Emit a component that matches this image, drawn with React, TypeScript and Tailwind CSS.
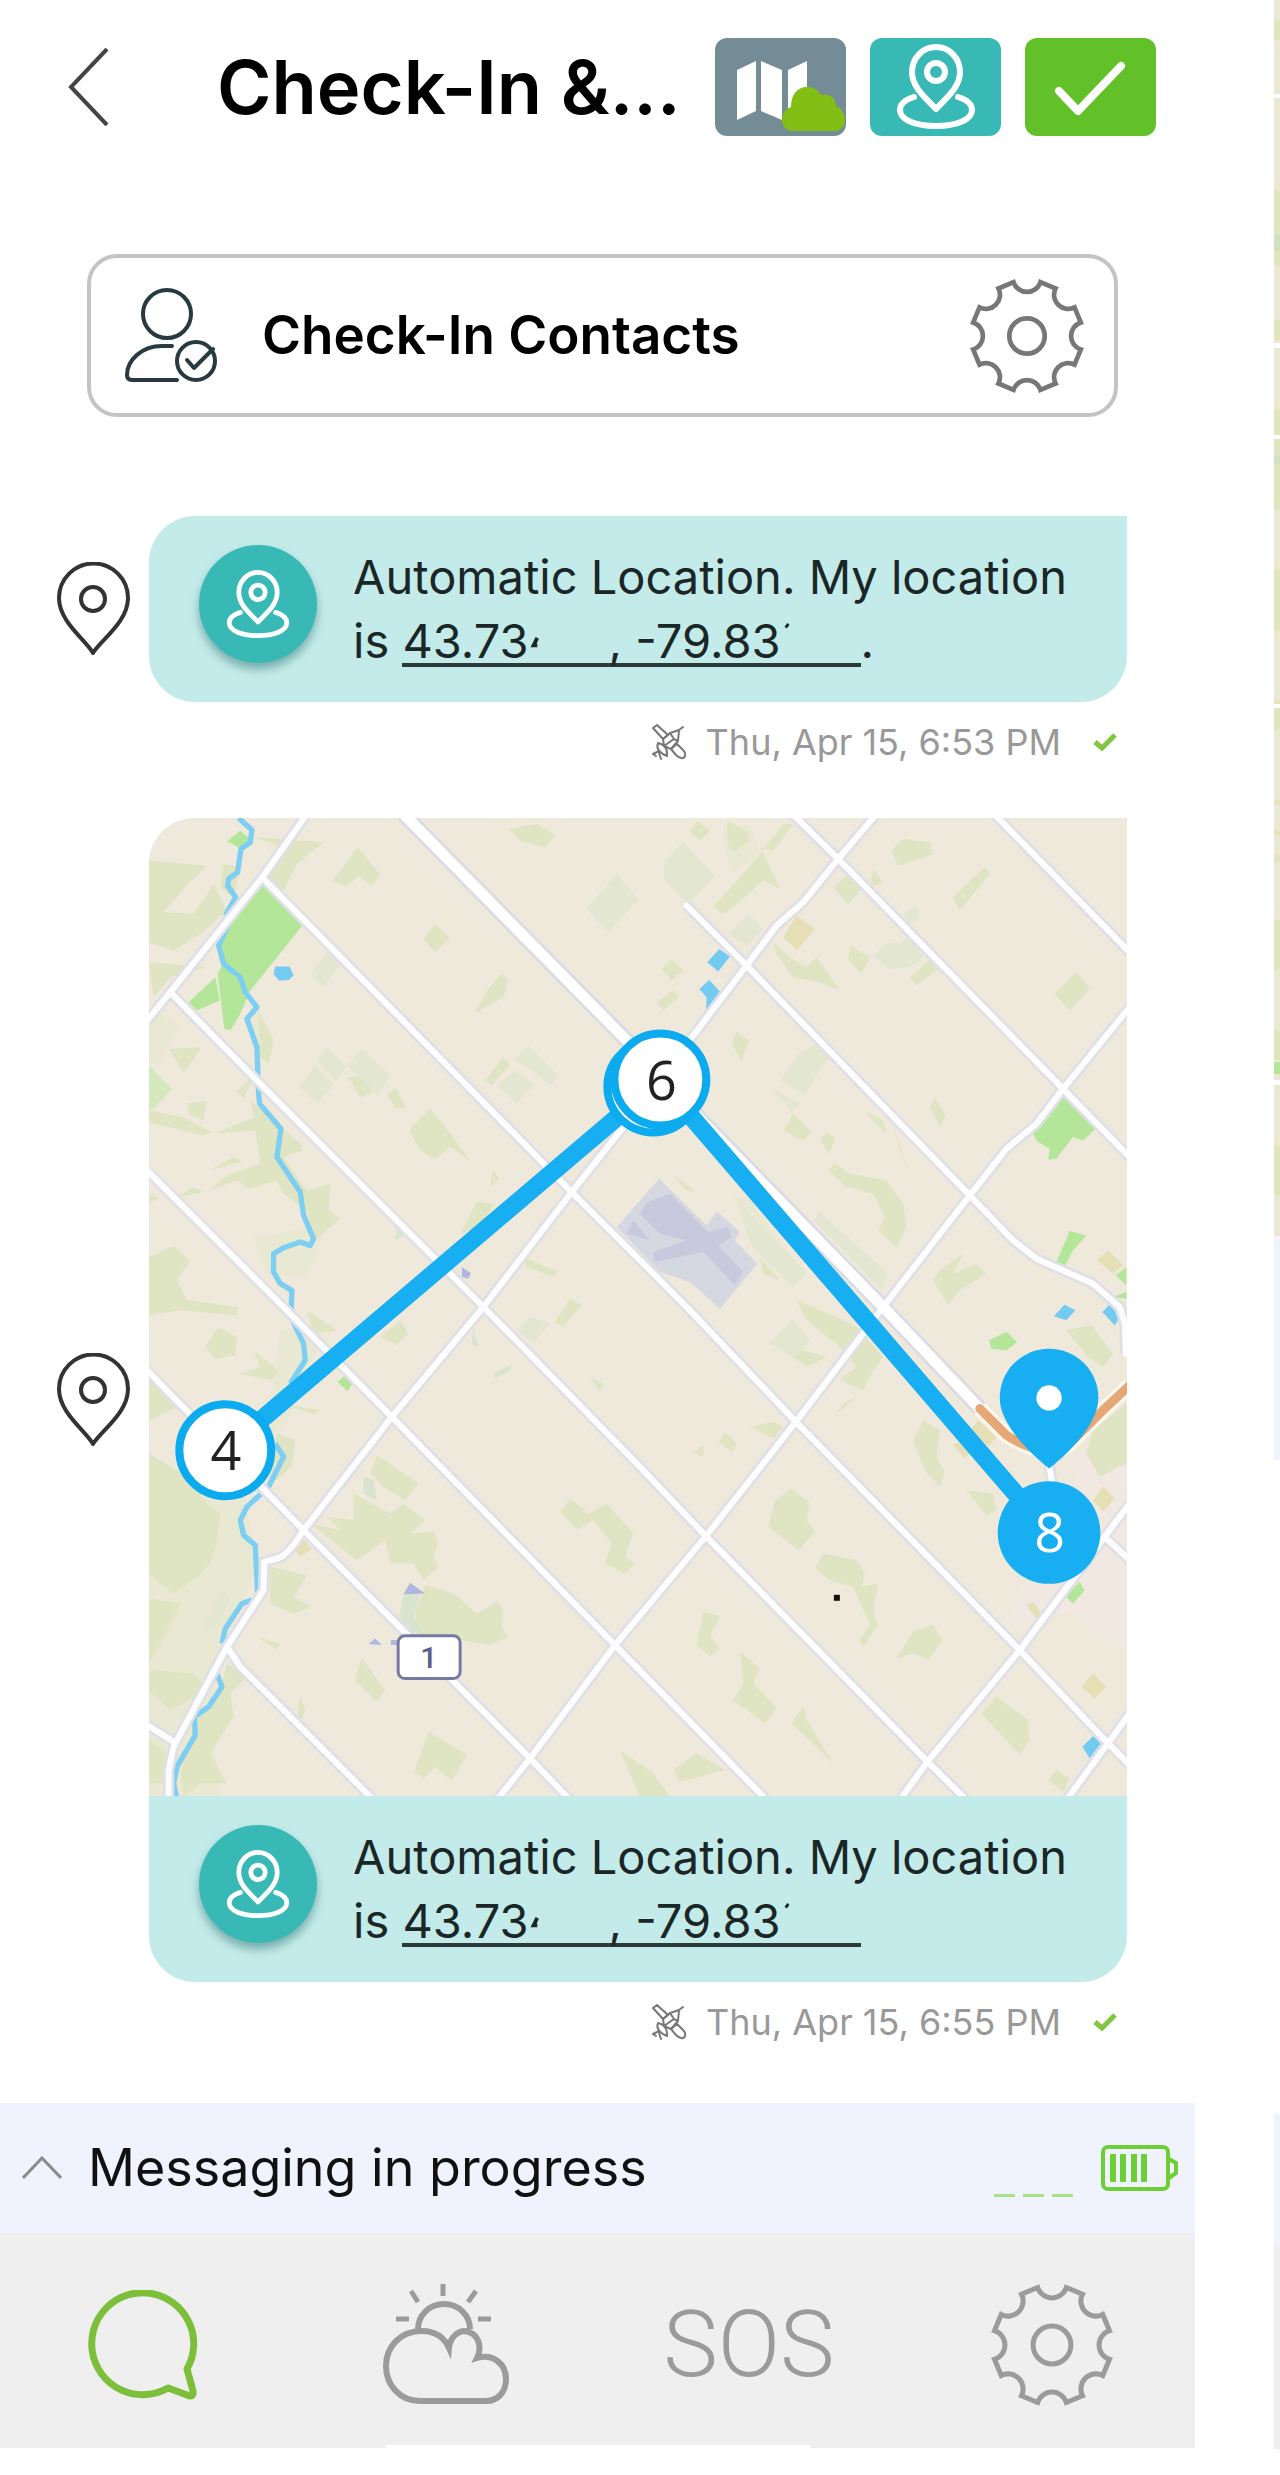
import React from 'react';

type IconProps = { className?: string };

const gearPath = (() => {
  const pt = (deg: number) => {
    const a = (deg * Math.PI) / 180;
    return `${(50 + 47 * Math.sin(a)).toFixed(1)} ${(50 - 47 * Math.cos(a)).toFixed(1)}`;
  };
  let d = '';
  for (let k = 0; k < 8; k++) {
    d += `${k === 0 ? 'M' : 'L'}${pt(k * 45 - 14)} A12 12 0 0 0 ${pt(k * 45 + 14)} `;
  }
  return d + 'Z';
})();

function GearIcon({ className }: IconProps) {
  return (
    <svg viewBox="0 0 100 100" className={className} fill="none" stroke="currentColor" strokeWidth="4" aria-hidden="true">
      <path d={gearPath} />
      <circle cx="50" cy="50" r="15" />
    </svg>
  );
}

function LocateIcon({ className }: IconProps) {
  return (
    <svg viewBox="0 0 80 86" className={className} fill="none" stroke="currentColor" strokeWidth="6" strokeLinecap="round" strokeLinejoin="round" aria-hidden="true">
      <path d="M40 65 C31 55 16 44 16 28 A24 25 0 0 1 64 28 C64 44 49 55 40 65 Z" />
      <circle cx="40" cy="28" r="9" />
      <path d="M18 53 C8 56 4 61 4 66 C4 76 20 82 40 82 C60 82 76 76 76 66 C76 61 72 56 62 53" />
    </svg>
  );
}

function PinIcon({ className }: IconProps) {
  return (
    <svg viewBox="0 0 73 94" className={className} fill="none" stroke="currentColor" strokeWidth="4" strokeLinejoin="round" aria-hidden="true">
      <path d="M36 91 C29 78 2 60 2 36 A34 34 0 0 1 71 36 C71 60 44 78 36 91 Z" />
      <circle cx="36" cy="37" r="12" />
    </svg>
  );
}

function ContactIcon({ className }: IconProps) {
  return (
    <svg viewBox="0 0 94 96" className={className} fill="none" stroke="currentColor" strokeWidth="4" strokeLinecap="round" strokeLinejoin="round" aria-hidden="true">
      <circle cx="43" cy="26" r="24" />
      <path d="M48 58 H38 C18 58 3 72 3 87 C3 91 5 92 8 92 H53" />
      <circle cx="72" cy="73" r="19" />
      <path d="M63 72 L70 80 L89 61" />
    </svg>
  );
}

function SatelliteIcon({ className }: IconProps) {
  return (
    <svg viewBox="0 0 38 38" className={className} fill="none" stroke="currentColor" strokeWidth="2" strokeLinecap="round" strokeLinejoin="round" aria-hidden="true">
      <path d="M3 5 L7 2 L18 12 L13 16 Z M27 21 L34 28 Q37 33 33 35 Q30 36 26 32 L21 26 Z" />
      <path d="M13 16 L20 10 L29 7 L28 18 L21 26 L14 23 Z M29 7 L33 4 M20 10 L24 16 L14 23 M24 16 L28 18" />
      <path d="M8 20 Q18 22 17 33 M8 20 Q5 28 17 33 M9 28 L3 31 M9 30 L11 36 M3 31 L6 33" />
    </svg>
  );
}

// Big woods and fields first, roads over them, then the track
function TrackMap() {
  const roads = [
    'M500 10 L370 195 L90 545 L20 630',
    'M370 205 L1295 1145 L1650 1500 L1968 1835 L2640 2520 L2905 2800 L2970 2865',
    'M90 545 L355 815 L1030 1490 L1500 1970 L1698 2178 L2363 2855 L2480 2970',
    'M20 1080 L430 1490 L755 1820 L1425 2505 L1880 2970',
    'M20 1680 L490 2160 L1170 2845 L1290 2970',
    'M260 2510 L300 2570 L700 2970',
    'M1640 285 L1820 465 L2490 1155 L2620 1290 L2690 1345 L2860 1420 L2940 1490 L2956 1540 L2958 1630',
    'M1960 12 L2095 145 L2770 835 L2970 1040',
    'M2565 12 L2970 425',
    'M2895 2180 L2970 2250',
    'M2210 10 L2095 145 L1990 275 L1910 345 L1820 465 L1450 950 L1295 1145 L1030 1490 L755 1820 L490 2160 Q440 2240 410 2245 L372 2255 L370 2340 L260 2510 L100 2810 L85 2880 L85 2970',
    'M2970 590 L2770 835 L2690 940 L2600 1015 L2490 1155 L2230 1490 L1968 1835 L1698 2178 L1425 2505 L1170 2845 L1070 2970',
    'M2970 2080 L2895 2180 L2640 2520 L2363 2855 L2280 2970',
    'M2970 2710 L2905 2800 L2780 2970',
    'M20 2745 L100 2795',
    'M2728 1960 L2740 2040',
  ];
  return (
    <svg viewBox="26 22 2936 2936" className="block w-full" role="img" aria-label="Track map">
      <rect width="3000" height="3000" fill="#efe9db" />

      <g fill="#e9e9d3">
        <path d="M26 600 L120 640 L60 760 L26 760 Z M330 560 L400 690 L380 760 L330 700 Z" />
        <path d="M26 1980 H300 L350 2280 L250 2500 L210 2700 L240 2960 L26 2960 Z" />
        <path d="M340 1280 L560 1240 L500 1400 L380 1390 Z M420 1560 L560 1540 L440 1840 L380 1880 Z" />
        <path d="M1750 60 L1830 40 L1860 130 L1770 190 Z M1780 1160 L1830 1160 L1950 1350 L1900 1400 Z" />
      </g>
      <path fill="#f1e8e2" d="M2790 1930 L2960 1900 L2960 2510 L2890 2490 L2800 2400 L2600 2450 L2640 2330 L2860 2200 Z" />

      <g fill="#dfe4c3">
        <path d="M26 150 L200 165 L140 225 L70 305 L160 310 L220 220 L260 300 L180 370 L100 420 L26 395 Z" />
        <path d="M250 160 L300 170 L280 260 L240 230 Z M26 455 L200 470 L90 500 L40 560 Z" />
        <path d="M340 80 L550 95 L470 160 L430 240 L380 195 L430 110 Z" />
        <path d="M652 110 L720 190 L695 228 L655 195 L620 228 L575 212 Z M1105 55 L1190 40 L1248 75 L1215 110 L1140 90 Z" />
        <path d="M885 340 L930 382 L885 425 L850 385 Z M1085 488 L1105 510 L1090 560 L1003 608 L1040 540 Z" />
        <path d="M85 715 L185 710 L130 785 Z M355 600 L400 690 L385 760 L360 740 Z M140 880 L200 870 L190 930 L145 910 Z" />
        <path d="M26 900 L130 920 L215 965 L190 975 L26 935 Z M220 970 L340 920 L330 870 L400 930 L480 1000 L490 1020 L430 1040 L500 1140 L570 1120 L565 1200 L600 1225 L520 1290 L500 1200 L430 1150 L410 1110 L330 1135 L290 1110 L205 1140 L260 1095 L360 1060 L345 960 Z" />
        <path d="M290 840 L340 800 L310 865 Z M205 1080 L280 1040 L305 1055 Z M26 1150 L60 1165 L26 1175 Z M110 1160 L160 1130 L190 1145 Z" />
        <path d="M26 1340 L100 1308 L150 1350 L110 1410 L140 1470 L295 1490 L290 1515 L120 1500 L26 1515 Z" />
        <path d="M235 1550 L290 1580 L285 1635 L225 1645 L195 1610 Z M340 1620 L415 1680 L395 1710 L300 1690 L360 1670 Z M500 1500 L590 1560 L520 1570 Z" />
        <path d="M26 1700 L110 1790 L26 1830 Z M410 1870 L465 1890 L455 1970 L380 2030 Z M430 1780 L540 1800 L520 1812 Z" />
        <path d="M26 1930 L110 1980 L200 2080 L240 2110 L230 2190 L210 2260 L170 2300 L100 2350 L26 2290 Z" />
        <path d="M26 2365 L120 2380 L60 2500 L26 2560 Z M130 2200 L180 2220 L180 2300 L130 2280 Z M26 2580 L160 2590 L200 2640 L90 2700 L26 2640 Z" />
        <path d="M260 2560 L320 2600 L270 2650 L280 2720 L210 2830 L260 2920 L180 2920 L130 2960 L120 2890 L170 2720 L240 2640 Z M26 2790 L80 2830 L75 2920 L26 2920 Z" />
        <path d="M390 2270 L500 2295 L460 2360 L515 2390 L460 2410 L390 2380 Z M350 2480 L420 2500 L410 2520 Z" />
        <path d="M710 1935 L835 2020 L795 2070 L730 2030 L690 1990 Z M640 2050 L750 2110 L790 2080 L855 2130 L810 2170 L880 2165 L895 2200 L880 2240 L895 2270 L850 2310 L820 2260 L750 2260 L735 2190 L650 2250 L510 2140 L600 2160 L560 2120 L640 2130 Z" />
        <path d="M855 2325 L940 2350 L1010 2410 L1070 2375 L1090 2400 L1085 2450 L1105 2480 L1050 2505 L965 2490 L830 2480 L825 2400 Z" />
        <path d="M665 2545 L735 2640 L710 2675 L645 2610 Z M865 2765 L980 2835 L935 2912 L885 2870 L850 2905 L822 2885 Z M480 2655 L495 2700 L465 2780 Z" />
        <path d="M765 830 L800 895 L765 890 L742 855 Z M870 895 L935 975 L990 1050 L930 1010 L885 1045 L840 1020 L808 960 Z M1090 740 L1110 762 L1055 825 L1035 810 Z" />
        <path d="M625 800 L690 790 L695 845 L660 862 Z M1010 1175 L1060 1180 L1030 1240 L960 1270 Z M1058 1078 L1078 1105 L1050 1130 Z M1150 1340 L1255 1385 L1240 1400 L1160 1370 Z" />
        <path d="M780 1530 L805 1570 L770 1605 L720 1580 Z M1290 1465 L1325 1485 L1270 1550 L1245 1535 Z M1350 1700 L1390 1720 L1380 1745 Z" />
        <path d="M1290 2065 L1345 2110 L1400 2080 L1480 2170 L1455 2240 L1485 2260 L1455 2290 L1395 2260 L1415 2200 L1360 2130 L1310 2158 L1260 2105 Z" />
        <path d="M1690 2405 L1742 2420 L1710 2475 L1740 2515 L1710 2538 L1670 2505 Z M1800 2525 L1860 2575 L1840 2620 L1910 2695 L1875 2740 L1780 2670 L1810 2620 Z" />
        <path d="M1440 2820 L1540 2890 L1590 2960 L1500 2960 Z M1600 2880 L1670 2830 L1755 2880 L1620 2915 Z M1990 2690 L2000 2730 L2080 2860 L1955 2740 Z" />
        <path d="M1955 2035 L2010 2080 L2000 2130 L2025 2165 L1975 2220 L1885 2150 L1905 2070 Z" />
        <path d="M2050 2230 L2150 2250 L2175 2290 L2165 2330 L2215 2320 L2200 2400 L2215 2445 L2170 2510 L2160 2490 L2190 2440 L2140 2330 L2070 2310 L2025 2275 Z" />
        <path d="M2380 2445 L2408 2490 L2365 2550 L2320 2530 L2270 2545 L2320 2465 Z M2570 2660 L2665 2730 L2670 2790 L2640 2835 L2525 2710 Z M2750 2880 L2790 2905 L2770 2945 L2725 2910 Z" />
        <path d="M1660 1925 L1690 1905 L1690 1940 Z M1755 1865 L1790 1900 L1780 1930 L1735 1895 Z M1830 1850 L1900 1835 L1930 1850 L1900 1885 Z" />
        <path d="M2350 1830 L2400 1860 L2390 1940 L2415 1985 L2400 2030 L2355 1980 L2320 1890 Z M2480 2040 L2560 2050 L2570 2100 L2540 2115 Z" />
        <path d="M1970 1470 L2090 1520 L2150 1550 L2230 1640 L2200 1680 L2170 1740 L2100 1710 L2150 1670 L2090 1600 L2000 1530 Z M1890 1590 L2060 1640 L2000 1670 Z M2150 1760 L2090 1810 L2110 1780 Z" />
        <path d="M1670 30 L1710 60 L1680 90 L1650 65 Z M1760 30 L1820 60 L1830 90 L1780 125 L1765 100 Z M1960 40 L1900 120 L1860 110 L1900 190 L1920 235 L1870 210 L1780 290 L1750 310 L1720 290 L1800 200 L1860 130 L1930 40 Z" />
        <path d="M2290 85 L2370 95 L2382 130 L2320 150 L2275 165 L2255 120 Z M2200 175 L2230 215 L2190 230 Z M2120 195 L2165 235 L2125 283 L2080 230 Z M2535 170 L2550 190 L2460 300 L2438 260 Z" />
        <path d="M2810 485 L2850 535 L2790 600 L2745 550 Z M2130 405 L2190 440 L2165 490 L2125 450 Z M2380 440 L2395 475 L2330 525 L2310 500 Z" />
        <path d="M1900 395 L1950 440 L2000 470 L2030 440 L2100 540 L2020 510 L1960 500 L1910 430 Z M1595 445 L1630 480 L1595 508 L1565 475 Z M1600 538 L1615 560 L1570 600 L1550 575 Z" />
        <path d="M1790 665 L1828 690 L1805 750 L1775 700 Z M1960 910 L2015 965 L1990 990 L1930 960 Z M2060 965 L2085 980 L2070 1030 L2040 990 Z M2170 900 L2230 930 L2240 970 Z M2260 950 L2305 1075 L2280 1020 Z M2385 860 L2418 915 L2400 950 L2370 890 Z" />
        <path d="M2085 1060 L2130 1090 L2240 1110 L2290 1180 L2300 1250 L2270 1310 L2215 1260 L2235 1220 L2200 1150 L2120 1130 L2065 1080 Z M1600 1090 L1665 1145 L1640 1140 Z" />
        <path d="M2470 1330 L2440 1390 L2510 1360 L2540 1390 L2460 1440 L2425 1485 L2380 1410 L2400 1380 Z M1860 1340 L1920 1410 L1870 1390 Z M2780 1560 L2855 1545 L2920 1630 L2890 1670 L2845 1640 Z M2960 1780 L2960 1960 L2880 2000 L2840 1930 L2860 1860 Z" />
      </g>

      <g fill="#e3e6d0">
        <path d="M1430 190 L1495 265 L1405 365 L1340 295 Z M560 425 L600 460 L550 530 L512 490 Z M560 710 L620 770 L585 812 L530 750 Z M525 765 L580 825 L530 880 L478 830 Z M665 715 L750 795 L715 855 L622 765 Z" />
        <path d="M1165 705 L1255 795 L1235 825 L1125 745 Z M1125 780 L1180 825 L1130 878 L1070 825 Z M1630 95 L1725 195 L1645 280 L1572 205 L1575 150 Z M1825 310 L1870 355 L1820 405 L1765 370 Z" />
        <path d="M2030 700 L2065 740 L1995 850 L1920 810 L1975 730 Z M1895 830 L1980 880 L1955 900 Z M2245 395 L2280 400 L2310 370 L2350 440 L2310 470 L2245 475 L2200 435 Z M2040 1205 L2245 1390 L2225 1440 L2020 1230 Z M1790 1170 L2000 1385 L1960 1430 L1830 1300 Z" />
        <path d="M1960 1530 L2010 1590 L1970 1640 L1890 1600 Z M2330 285 L2340 320 L2310 340 L2290 310 Z M240 2340 L270 2360 L230 2460 L190 2450 Z M1170 1520 L1230 1540 L1180 1600 L1130 1560 Z" />
      </g>
      <path fill="#d2e2cd" opacity=".8" d="M670 2000 L700 2010 L710 2070 L670 2050 Z M790 2350 L840 2340 L820 2420 L850 2470 L770 2460 Z M1000 1550 L1015 1610 L995 1600 Z M1060 1690 L1115 1665 L1110 1680 L1065 1705 Z M770 1245 L790 1275 L765 1290 Z" />

      <g fill="#b3e699">
        <path d="M368 215 L490 340 L330 540 L300 610 L270 660 L252 655 L232 490 L245 465 L240 410 L260 345 Z" />
        <path d="M225 500 L238 570 L170 600 L145 575 Z M300 60 L330 85 L310 118 L260 92 Z M615 1695 L638 1718 L622 1743 L592 1715 Z" />
        <path d="M2770 860 L2868 955 L2830 990 L2800 980 L2750 1045 L2725 1048 L2730 1015 L2695 995 L2675 965 Z" />
        <path d="M2790 1262 L2840 1275 L2800 1320 L2775 1370 L2750 1355 Z M2960 1370 L2960 1425 L2928 1395 Z M2960 1445 L2960 1465 L2920 1460 Z M2600 1565 L2632 1595 L2600 1620 L2555 1615 L2548 1590 Z M2820 2315 L2835 2340 L2800 2380 L2778 2360 Z" />
      </g>
      <path fill="#d3e9bb" d="M26 765 L95 835 L45 890 L26 900 Z" />
      <path fill="#e6dfb5" d="M1970 315 L2025 355 L1972 418 L1930 380 Z M2905 1320 L2950 1365 L2920 1390 L2872 1350 Z M2890 2028 L2925 2065 L2890 2105 L2860 2070 Z M2860 2590 L2900 2630 L2865 2665 L2825 2630 Z M2680 2375 L2705 2410 L2690 2425 L2660 2385 Z M2515 1830 L2570 1880 L2545 1910 L2490 1860 Z M2455 1895 L2490 1930 L2475 1945 L2440 1905 Z M485 2185 L515 2215 L480 2240 L465 2220 Z" />

      <path fill="#d6d8e1" d="M1558 1105 L1700 1245 L1732 1203 L1800 1265 L1785 1290 L1852 1360 L1740 1495 L1650 1415 L1560 1385 L1430 1250 Z" />
      <path fill="#c8c9dc" d="M1520 1175 L1590 1150 L1705 1265 L1765 1250 L1775 1280 L1735 1305 L1810 1385 L1785 1425 L1690 1325 L1545 1355 L1540 1325 L1640 1290 L1560 1270 L1500 1210 Z M1480 1230 L1530 1290 L1460 1270 Z" />
      <path fill="#9fabe0" opacity=".8" d="M810 2318 L855 2350 L790 2352 Z M705 2485 L725 2505 L685 2502 Z M965 1370 L992 1388 L985 1405 L965 1400 Z M752 2490 L775 2490 L775 2505 L752 2505 Z" />
      <g fill="#74cbf2">
        <path d="M405 468 H448 L460 495 L445 508 L415 510 L400 490 Z M1738 415 L1770 438 L1735 483 L1702 455 Z M1708 508 L1742 545 L1720 575 L1698 605 L1700 560 L1678 535 Z" />
        <path d="M2775 1483 L2807 1500 L2780 1530 L2742 1518 Z M2910 1482 L2940 1520 L2925 1545 L2888 1505 Z M2865 2773 L2885 2800 L2850 2845 L2828 2810 Z" />
      </g>

      <g fill="none" stroke="#7ccef3" strokeWidth="16" strokeLinejoin="round">
        <path d="M295 22 L335 58 L330 95 L302 115 L292 185 L265 205 L262 225 L286 260 L255 315 M262 345 L235 405 L250 460 L300 500 L315 545 L350 590 L320 625 L350 710 L355 850 L358 880 L422 955 L410 1040 L480 1145 L490 1215 L520 1285 L510 1305 L480 1295 L430 1312 L400 1330 L400 1385 L420 1420 L455 1440 L452 1520 L490 1600 L495 1650 L450 1720 M405 1900 L430 1940 L385 2030 L320 2090 L300 2130 L310 2175 L345 2205 L352 2350" />
        <path d="M335 2370 L305 2380 L255 2455 L245 2500 M225 2580 L245 2630 L205 2690 L162 2720 L165 2775 L110 2870 L100 2920 L108 2960" />
      </g>

      <g fill="none" stroke="#dfe0e6" strokeWidth="34" strokeLinejoin="round">
        {roads.map((d) => <path key={d} d={d} />)}
      </g>
      <path d="M790 10 L1470 700 L1680 925 L2230 1490 L2520 1795" fill="none" stroke="#dbdbe5" strokeWidth="48" />
      <g fill="none" stroke="#fdfdff" strokeWidth="18" strokeLinejoin="round" strokeLinecap="round">
        {roads.map((d) => <path key={d} d={d} />)}
      </g>
      <path d="M790 10 L1470 700 L1680 925 L2230 1490 L2520 1795" fill="none" stroke="#ffffff" strokeWidth="32" />
      <path d="M2520 1795 L2600 1875 Q2700 1940 2780 1910 L2890 1800 L2970 1725" fill="none" stroke="#fdf8ee" strokeWidth="46" />
      <path d="M2520 1795 L2600 1875 Q2700 1940 2780 1910 L2890 1800 L2970 1725" fill="none" stroke="#e6a777" strokeWidth="27" strokeLinecap="round" />

      <rect x="774" y="2477" width="186" height="128" rx="20" fill="#fff" stroke="#7579a3" strokeWidth="9" />
      <text x="866" y="2573" textAnchor="middle" fontFamily="Roboto, sans-serif" fontWeight="500" fontSize="90" fill="#5a5e88">1</text>
      <rect x="2082" y="2354" width="18" height="18" fill="#111" />

      <path d="M255 1920 L1540 828 M1560 810 L2728 2167" stroke="#17aef2" strokeWidth="54" />
      <g stroke="#0cabef" strokeWidth="24" fill="#fff">
        <circle cx="255" cy="1920" r="138" />
        <circle cx="1540" cy="828" r="138" />
        <circle cx="1561" cy="807" r="138" />
      </g>
      <g fill="#17aef2">
        <circle cx="2728" cy="2167" r="154" />
        <path d="M2728 1975 C2690 1945 2580 1850 2580 1763 A148 148 0 0 1 2876 1763 C2876 1850 2766 1945 2728 1975 Z" />
      </g>
      <circle cx="2728" cy="1763" r="38" fill="#fff" />
      <g fontFamily="'Open Sans', sans-serif" fontSize="162" textAnchor="middle" fill="#222">
        <text x="257" y="1978">4</text>
        <text x="1564" y="868">6</text>
        <text x="2730" y="2226" fill="#fff">8</text>
      </g>
    </svg>
  );
}

// The last digits of both coordinates stay hidden, only the underline runs on
function LocationText({ end }: { end: string }) {
  return (
    <div className="flex items-start gap-9 px-[50px] py-[29px]">
      <span className="flex h-[118px] w-[118px] shrink-0 items-center justify-center rounded-full bg-[#39b9b6] text-white shadow-[0_6px_10px_rgba(0,80,80,0.4)]">
        <LocateIcon className="w-16" />
      </span>
      <p className="text-[47px] leading-[64px] whitespace-nowrap text-[#1b2626]">
        Automatic Location. My location
        <br />
        is{' '}
        <a href="#map" className="inline-flex h-[58px] border-b-4 border-[#2c3a3a] align-top">
          <span>43.73</span>
          <svg viewBox="0 0 80 58" className="w-20" fill="none" stroke="currentColor" strokeWidth="4" aria-hidden="true">
            <path d="M7 31 L3 39 H7" />
          </svg>
          <span className="whitespace-pre">, -79.83</span>
          <svg viewBox="0 0 80 58" className="w-20" fill="none" stroke="currentColor" strokeWidth="3" aria-hidden="true">
            <path d="M2 20 L5 16" />
          </svg>
        </a>
        {end}
      </p>
    </div>
  );
}

function Message({ time, end = '', map }: { time: string; end?: string; map?: boolean }) {
  return (
    <li>
      <div className="flex items-center gap-[19px]">
        <PinIcon className="w-[73px] shrink-0 text-[#333]" />
        <div className="flex-1 overflow-hidden rounded-[46px] rounded-tr-none bg-[#c3ebe9]">
          {map && <TrackMap />}
          <LocationText end={end} />
        </div>
      </div>
      <div className="mb-9 flex h-20 items-center justify-end pr-[10px] text-[#999]">
        <SatelliteIcon className="mr-[18px] w-[38px] text-[#777]" />
        <time className="text-[36px]">{time}</time>
        <svg viewBox="0 0 24 20" className="ml-8 w-6" fill="none" stroke="#84c546" strokeWidth="5" aria-label="Delivered">
          <path d="M2 10 L9 16 L22 3" />
        </svg>
      </div>
    </li>
  );
}

export default function App() {
  return (
    <div className="flex min-h-[2475px] bg-white font-['Inter',sans-serif] text-black">
      <main className="min-w-0 flex-1">
        <header className="flex items-center pt-[38px] pr-[39px] pl-[68px]">
          <button type="button" aria-label="Back" className="mr-[108px]">
            <svg viewBox="0 0 41 78" className="w-[41px]" fill="none" stroke="#444" strokeWidth="4">
              <path d="M39 1 L3 39 L39 77" />
            </svg>
          </button>
          <h1 className="flex-1 text-[74px] leading-[98px] font-semibold whitespace-nowrap">Check-In &amp;...</h1>
          <div className="flex gap-6">
            <button type="button" aria-label="Map" className="h-[98px] w-[131px] rounded-xl bg-[#748c96]">
              <svg viewBox="0 0 131 98" className="w-full">
                <path fill="#fff" d="M22 32 L41 23 V73 L22 82 Z M46 23 L67 32 V82 L46 73 Z M73 32 L92 23 V73 L73 82 Z" />
                <path fill="#82be13" d="M78 93 C71 93 67 88 67 82 C67 75 71 71 76 69 C76 57 82 49 92 49 C99 49 103 52 106 57 C114 55 121 60 121 68 C127 71 130 76 130 82 C130 88 126 93 119 93 Z" />
              </svg>
            </button>
            <button type="button" aria-label="Send location" className="flex h-[98px] w-[131px] items-center justify-center rounded-xl bg-[#39b9b6] text-white">
              <LocateIcon className="w-20" />
            </button>
            <button type="button" aria-label="Check in" className="h-[98px] w-[131px] rounded-xl bg-[#62c028]">
              <svg viewBox="0 0 131 98" className="w-full" fill="none" stroke="#fff" strokeWidth="8" strokeLinecap="round" strokeLinejoin="round">
                <path d="M34 53 L53 73 L96 28" />
              </svg>
            </button>
          </div>
        </header>

        <button type="button" className="mt-[118px] mr-[77px] ml-[87px] flex h-[163px] w-[calc(100%-164px)] items-center rounded-[30px] border-4 border-[#c4c4c4] pr-7 pl-[33px] text-left">
          <ContactIcon className="w-[94px] text-[#263a40]" />
          <span className="ml-11 flex-1 text-[53px] font-semibold">Check-In Contacts</span>
          <GearIcon className="w-[118px] text-[#777]" />
        </button>

        <ul className="mt-[99px] pr-[68px] pb-[5px] pl-[57px]">
          <Message time="Thu, Apr 15, 6:53 PM" end="." />
          <Message time="Thu, Apr 15, 6:55 PM" map />
        </ul>

        <section className="flex h-[130px] items-center bg-[#f0f3fd] pr-4 pl-[22px]">
          <svg viewBox="0 0 40 24" className="w-10" fill="none" stroke="#8b8b8b" strokeWidth="3">
            <path d="M1 22 L20 2 L39 22" />
          </svg>
          <p className="ml-[26px] flex-1 text-[52px] text-[#111]">Messaging in progress</p>
          <span className="mt-[54px] mr-7 flex gap-2">
            <span className="h-[3px] w-[21px] bg-[#a9e085]" />
            <span className="h-[3px] w-[21px] bg-[#a9e085]" />
            <span className="h-[3px] w-[21px] bg-[#a9e085]" />
          </span>
          <svg viewBox="0 0 78 46" className="w-[78px]" fill="none" stroke="#6bcf35" strokeWidth="4" aria-label="Battery">
            <rect x="2" y="2" width="65" height="42" rx="5" />
            <path d="M68 14 L75 18 V28 L68 33" />
            <path d="M12 9 V37 M22 9 V37 M33 9 V37 M43 9 V37" strokeWidth="6" />
          </svg>
        </section>

        <nav className="relative h-[215px] overflow-hidden bg-[#efefef] pt-2 text-[#9b9b9b]">
          <div className="-mx-2 grid h-full grid-cols-4 place-items-center">
            <a href="#messages" aria-label="Messages">
              <svg viewBox="0 0 110 110" className="w-[110px]" fill="none" stroke="#7dbf3b" strokeWidth="7" strokeLinejoin="round">
                <path d="M80 98 A51 51 0 1 1 99 79 L105 101 Q106 108 99 105 Z" />
              </svg>
            </a>
            <a href="#weather" aria-label="Weather">
              <svg viewBox="0 0 128 121" className="w-32" fill="none" stroke="currentColor" strokeWidth="6">
                <path d="M36 45 A26 25 0 0 1 88 45" />
                <path d="M38 117 C18 117 4 101 4 82 C4 62 19 47 40 47 C53 47 62 53 67 64 C68 54 75 47 83 47 C96 49 101 62 95 74 C111 69 124 80 124 95 C124 108 116 117 104 117 Z" />
                <path d="M61 0 V12 M29 7 L36 18 M94 7 L86 18 M14 35 H27 M96 35 H109" strokeWidth="5" />
              </svg>
            </a>
            <a href="#sos" className="font-['Roboto',sans-serif] text-[92px] leading-none font-light">
              SOS
            </a>
            <a href="#settings" aria-label="Settings">
              <GearIcon className="w-[126px]" />
            </a>
          </div>
          <span className="absolute bottom-0 left-1/2 h-[3px] w-[425px] -translate-x-1/2 bg-white" />
        </nav>
      </main>

      <aside className="ml-[79px] flex w-[6px] shrink-0 flex-col">
        <svg viewBox="0 0 6 1236" preserveAspectRatio="none" className="h-[1236px] w-full shrink-0">
          <rect width="6" height="1236" fill="#ebe8d6" />
          <path fill="#dfe5bd" d="M0 20h6v20h-6z M0 190h6v75h-6z M0 320h6v20h-6z M0 410h6v100h-6z M0 570h6v60h-6z M0 700h6v30h-6z M0 800h6v5h-6z M0 830h6v5h-6z M0 855h6v8h-6z M0 920h6v50h-6z M0 1030h6v30h-6z M0 1145h6v50h-6z" />
          <path fill="#cfe0c4" d="M0 235h6v16h-6z M0 456h6v8h-6z" />
          <path fill="#b3e699" d="M0 1062h6v12h-6z" />
          <path fill="#fff" d="M0 94h6v4h-6z M0 343h6v5h-6z M0 435h6v4h-6z M0 704h6v4h-6z M0 1080h6v5h-6z" />
        </svg>
        <div className="h-[224px] bg-[#f0f3fd]" />
        <div className="mt-[654px] h-[132px] bg-[#f0f3fd]" />
        <div className="h-[203px] bg-[#efefef]" />
      </aside>
    </div>
  );
}
